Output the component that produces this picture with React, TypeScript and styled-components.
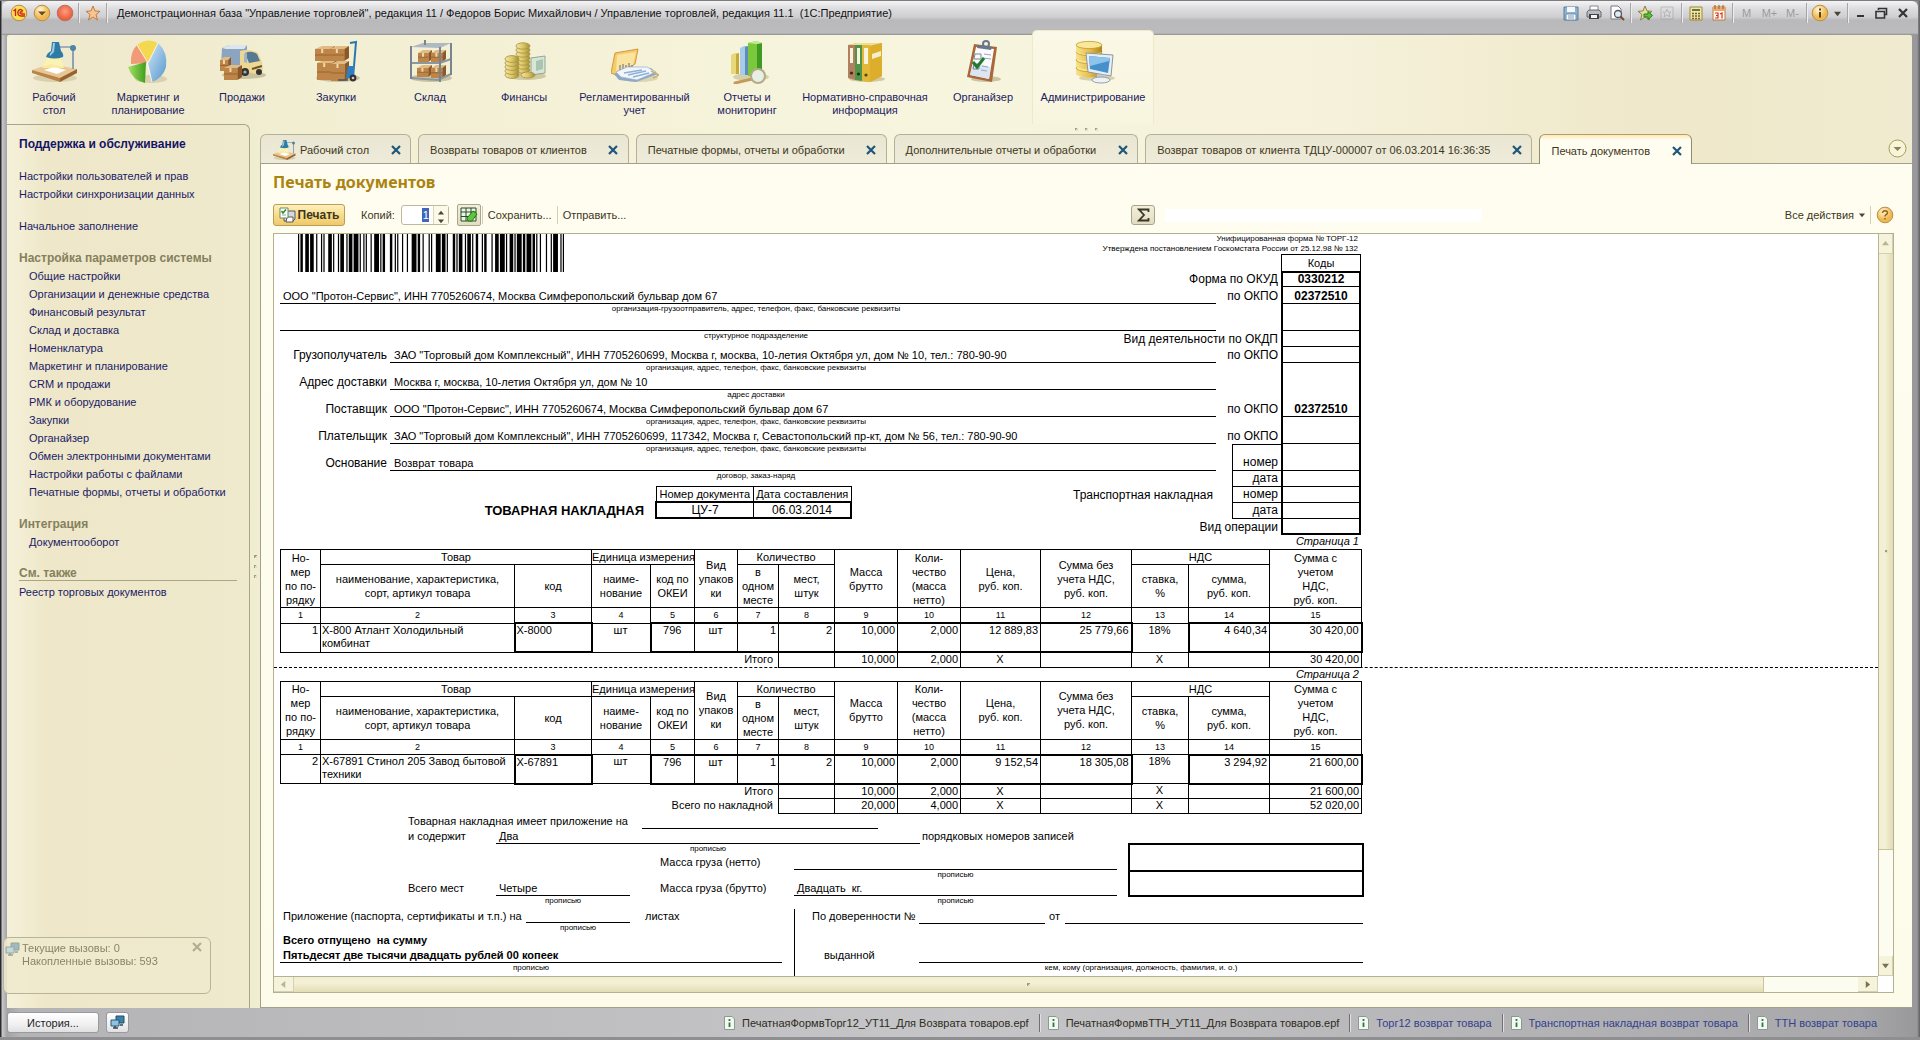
import React from "react";
import styled, { createGlobalStyle, css } from "styled-components";

const Global = createGlobalStyle`
  *, *::before, *::after { box-sizing: border-box; }
  html, body, #root { height: 100%; margin: 0; }
  body { overflow: hidden; font: 11px/14px "Liberation Sans", Arial, sans-serif; color: #3d3620; }
  button, input { font: inherit; color: inherit; margin: 0; padding: 0; border: 0; background: none; border-radius: 0; }
  button { cursor: pointer; }
  a { text-decoration: none; color: inherit; }
  h1, h2, h3, p, ul { margin: 0; padding: 0; font-weight: inherit; font-size: inherit; }
  svg { display: block; flex: none; }
`;

/* ---------- window frame ---------- */

const Window = styled.div`
  height: 100vh;
  display: flex;
  flex-direction: column;
  padding: 0 8px 0 7px;
  border-top: 1px solid #7d7a80;
  border-bottom: 3px solid #8f8f92;
  background: linear-gradient(90deg, #2a2a2c 0 1px, #c9c9cc 2px, #a3a3a6 7px, #b4b4b7 20px, #c6c6c8 50%, #a8a8ab calc(100% - 60px), #98989b calc(100% - 3px), #5e5c62 100%);
`;

const TitleBar = styled.header`
  height: 34px;
  margin: 0 -6px 0 -5px;
  padding: 0 5px 10px 5px;
  display: flex;
  align-items: center;
  background: linear-gradient(#f4f4f5 0, #dcdcde 8px, #cfcfd1 16px, #b9b9bc 19px, #bcbcbf 32px, #8e8e8e 34px);
  border-radius: 6px 6px 0 0;
`;

const TitleText = styled.h1`
  flex: 1;
  padding-left: 8px;
  color: #111;
  white-space: pre;
`;

const TitleButton = styled.button<{ $w?: number; $faint?: boolean }>`
  width: ${(p) => p.$w ?? 23}px;
  height: 22px;
  display: flex;
  align-items: center;
  justify-content: center;
  color: ${(p) => (p.$faint ? "#9a9a9c" : "#333")};
`;

const TitleSep = styled.span`
  width: 1px;
  height: 20px;
  margin: 0 2px;
  background: #a6a6a8;
  box-shadow: 1px 0 #ececee;
`;

const Client = styled.div`
  flex: 1;
  min-height: 0;
  display: flex;
  flex-direction: column;
  border-radius: 2px;
  background: linear-gradient(90deg, #f6f2dc 0, #efe9cd 40px, #f2eed2 15%, #f8f5df 48%, #f5f1da 70%, #efe8ca 86%, #f0ebd0 100%);
`;

/* ---------- sections panel ---------- */

const Sections = styled.nav`
  display: flex;
  height: 89px;
`;

const SectionButton = styled.button<{ $w: number; $active?: boolean }>`
  width: ${(p) => p.$w}px;
  display: flex;
  flex-direction: column;
  align-items: center;
  padding-top: 5px;
  gap: 7px;
  line-height: 13px;
  color: #1b2160;
  white-space: pre-line;
  ${(p) =>
    p.$active &&
    css`
      margin-top: -5px;
      padding-top: 9px;
      border: 1px solid #efe9c9;
      border-bottom: 0;
      border-radius: 5px 5px 0 0;
      background: linear-gradient(#faf8e6, #f8f5df);
    `}
`;

/* ---------- left navigation ---------- */

const Workspace = styled.div`
  flex: 1;
  min-height: 0;
  display: flex;
`;

const Sidebar = styled.nav`
  width: 243px;
  padding: 10px 12px;
  display: flex;
  flex-direction: column;
  gap: 14px;
  line-height: 18px;
  border: 1px solid #a9a58c;
  border-width: 1px 1px 0 0;
  border-radius: 0 6px 0 0;
  background: linear-gradient(90deg, #f5f1da 0, #eee7c9 40px, #efe9cd 100%);
`;

const NavTitle = styled.h2`
  font-size: 12px;
  font-weight: bold;
  color: #141466;
`;

const NavGroup = styled.section`
  display: flex;
  flex-direction: column;
`;

const NavHeading = styled.h3<{ $line?: boolean }>`
  font-size: 12px;
  font-weight: bold;
  color: #85805c;
  ${(p) =>
    p.$line &&
    css`
      line-height: 14px;
      margin-bottom: 2px;
      padding-top: 1px;
      border-bottom: 1px solid #aaa682;
    `}
`;

const NavLink = styled.a<{ $indent?: boolean }>`
  padding-left: ${(p) => (p.$indent ? 10 : 0)}px;
  color: #1b1b66;
  white-space: nowrap;
`;

const Splitter = styled.div<{ $vertical?: boolean }>`
  display: flex;
  align-items: center;
  justify-content: center;
  gap: 7px;
  ${(p) => (p.$vertical ? "width: 10px; flex-direction: column;" : "height: 10px;")}
`;

const GripDot = styled.i`
  width: 3px;
  height: 3px;
  background: linear-gradient(135deg, #a09c80 50%, #e4dfc4 50%);
`;

/* ---------- tabs ---------- */

const Main = styled.main`
  flex: 1;
  min-width: 0;
  display: flex;
  flex-direction: column;
`;

const TabBar = styled.div`
  display: flex;
  align-items: flex-end;
  gap: 7px;
  height: 29px;
`;

const Tab = styled.div<{ $active?: boolean }>`
  height: 29px;
  margin-bottom: ${(p) => (p.$active ? -1 : 0)}px;
  padding: 2px 8px 0 11px;
  display: flex;
  align-items: center;
  border: 1px solid #b3b097;
  border-bottom: 0;
  border-radius: 6px 6px 0 0;
  background: ${(p) => (p.$active ? "linear-gradient(#fbe9b8 0, #fffdf0 5px, #fffdf0)" : "linear-gradient(#e9e6d2, #eeebda)")};
  z-index: ${(p) => (p.$active ? 1 : 0)};
  ${(p) => p.$active && "height: 30px; border-color: #b59f60 #8f8c74 transparent; align-self: flex-start;"}
`;

const TabLabel = styled.button`
  display: flex;
  align-items: center;
  gap: 4px;
  margin-right: 20px;
  color: #40361a;
  white-space: nowrap;
`;

const TabClose = styled.button`
  width: 13px;
  height: 14px;
  display: flex;
  align-items: center;
  justify-content: center;
`;

const TabMenu = styled.button`
  margin: 0 5px 5px auto;
`;

/* ---------- form ---------- */

const Form = styled.section`
  flex: 1;
  min-height: 0;
  display: flex;
  flex-direction: column;
  padding: 6px 18px 14px 12px;
  border: 1px solid #a3a088;
  border-right: 0;
  background: linear-gradient(#fffdf0, #fdfbe9);
`;

const FormTitle = styled.h2`
  font: bold 16px/24px "Noto Sans", "Open Sans", sans-serif;
  color: #ab8410;
`;

const Toolbar = styled.div`
  display: flex;
  align-items: center;
  height: 22px;
  margin: 10px 0 7px;
  white-space: nowrap;
`;

const PrintButton = styled.button`
  height: 22px;
  width: 72px;
  display: flex;
  align-items: center;
  justify-content: center;
  gap: 2px;
  margin-right: 16px;
  font-size: 12px;
  font-weight: bold;
  border: 1px solid #bd9d55;
  border-radius: 3px;
  background: linear-gradient(#fdf0bf, #f7dc8c 50%, #efc96a);
`;

const CopiesBox = styled.span`
  width: 48px;
  height: 20px;
  margin: 0 8px 0 6px;
  display: flex;
  align-items: center;
  border: 1px solid #bdb99c;
  border-radius: 3px;
  background: #fff;
`;

const CopiesInput = styled.input`
  width: 7px;
  height: 14px;
  margin: 0 4px 0 auto;
  text-align: right;
  color: #fff;
  background: #4066b8;
`;

const Spinner = styled.span`
  width: 15px;
  height: 18px;
  display: flex;
  flex-direction: column;
  align-items: center;
  justify-content: center;
  gap: 5px;
  border-left: 1px solid #dcd8c0;
  background: #fbf9e8;
`;

const SpinButton = styled.button`
  height: 3px;
  display: flex;
`;

const IconButton = styled.button`
  width: 24px;
  height: 22px;
  display: flex;
  align-items: center;
  justify-content: center;
  border: 1px solid #a8a58c;
  border-radius: 2px;
  background: linear-gradient(#f3efd9, #e2ddc0);
`;

const ToolSep = styled.span<{ $tight?: boolean }>`
  width: 1px;
  height: 18px;
  margin: 0 5px 0 ${(p) => (p.$tight ? 1 : 5)}px;
  background: #d2ceb4;
`;

const TextButton = styled.button<{ $push?: boolean }>`
  display: flex;
  align-items: center;
  gap: 5px;
  ${(p) => p.$push && "margin-left: auto;"}
`;

const SumGroup = styled.div`
  display: flex;
  align-items: center;
  gap: 10px;
  margin-left: 505px;
`;

const SumButton = styled(IconButton)`
  height: 20px;
  border-radius: 3px;
`;

const SumInput = styled.input`
  width: 317px;
  height: 13px;
  background: #fff;
`;

/* ---------- sheet viewer ---------- */

const Viewer = styled.div`
  flex: 1;
  min-height: 0;
  display: grid;
  grid-template: minmax(0, 1fr) 16px / minmax(0, 1fr) 15px;
  border: 1px solid #b3b192;
  background: #fff;
`;

const Sheet = styled.article`
  overflow: hidden;
  color: #000;
  background: #fff;
`;

const VScroll = styled.div`
  display: flex;
  flex-direction: column;
  border-left: 1px solid #b9b592;
  background: #fdfcf0;
`;

const HScroll = styled.div`
  display: flex;
  border-top: 1px solid #b3b192;
  background: #fdfcf0;
`;

const ScrollArrow = styled.button`
  min-width: 14px;
  min-height: 15px;
  flex: 0 0 20px;
  display: flex;
  align-items: center;
  justify-content: center;
  border: 0 solid #d5d1b0;
  border-width: 0 1px 1px 0;
  background: #f6f3dd;
`;

const ScrollThumb = styled.div<{ $share: number; $vertical?: boolean }>`
  flex: ${(p) => p.$share} 0 0;
  display: flex;
  align-items: center;
  justify-content: center;
  border: 0 solid #c9c49c;
  border-width: ${(p) => (p.$vertical ? "0 0 1px" : "0 1px 0 0")};
  background: ${(p) => `linear-gradient(${p.$vertical ? "90deg, " : ""}#f2eed2, #f4f0d6 40%, #e2ddb4)`};
`;

const ScrollGap = styled.div<{ $share: number }>`
  flex: ${(p) => p.$share} 0 0;
`;

/* ---------- printed form: heading ---------- */

const HeadGrid = styled.div`
  margin-left: 6px;
  display: grid;
  grid-template-columns: 110px 826px 16px 49px 80px;
  grid-template-rows: 20px 17px 16px 17px 27px 16px 16px 27px 27px 27px 27px 16px 16px 16px 16px 14px;
`;

const line = "1px solid #000";
const thick = "2px solid #000";

const Approval = styled.p`
  grid-area: 1 / 2 / 2 / 6;
  padding-right: 3px;
  text-align: right;
  font-size: 8px;
  line-height: 10px;
  white-space: pre-line;
`;

const BarcodeSvg = styled.svg`
  grid-area: 1 / 1 / 4 / 3;
  width: 266px;
  height: 38px;
  margin-left: 18px;
`;

const Field = styled.div<{ $row: number; $wide?: boolean }>`
  grid-row: ${(p) => p.$row};
  grid-column: ${(p) => (p.$wide ? "1 / 3" : "2 / 3")};
  display: flex;
  align-items: flex-end;
  padding-left: ${(p) => (p.$wide ? 3 : 4)}px;
  border-bottom: ${line};
  line-height: 14px;
  white-space: nowrap;
`;

const Note = styled.small<{ $row: number }>`
  grid-row: ${(p) => p.$row};
  grid-column: 1 / 4;
  font-size: 8px;
  line-height: 10px;
  text-align: center;
`;

const Label = styled.div<{ $row: number; $from?: number; $to?: number; $boxed?: boolean; $top?: boolean }>`
  grid-row: ${(p) => p.$row};
  grid-column: ${(p) => p.$from ?? 2} / ${(p) => p.$to ?? 5};
  align-self: stretch;
  display: flex;
  align-items: flex-end;
  justify-content: flex-end;
  padding-right: 3px;
  font-size: 12px;
  line-height: 15px;
  white-space: nowrap;
  border: 0 solid #000;
  ${(p) => p.$boxed && "border-width: 0 0 1px 1px;"}
  ${(p) => p.$top && "border-top-width: 1px;"}
`;

const CodeHead = styled.div`
  grid-area: 2 / 5;
  border: ${line};
  border-bottom: 0;
  line-height: 17px;
  text-align: center;
`;

const Code = styled.div<{ $row: number; $span?: number; $first?: boolean; $last?: boolean }>`
  grid-row: ${(p) => p.$row} / span ${(p) => p.$span ?? 1};
  grid-column: 5;
  display: flex;
  align-items: flex-end;
  justify-content: center;
  font-size: 12px;
  font-weight: bold;
  line-height: 13px;
  border: ${thick};
  border-top: ${(p) => (p.$first ? thick : 0)};
  border-bottom: ${(p) => (p.$last ? thick : line)};
`;

const DocTitle = styled.div`
  grid-area: 13 / 1 / 15 / 3;
  display: flex;
  align-items: flex-end;
`;

const DocName = styled.h2`
  width: 364px;
  margin-right: 11px;
  text-align: right;
  font-size: 13px;
  font-weight: bold;
  line-height: 16px;
`;

const NumberTable = styled.table`
  width: 197px;
  border-collapse: collapse;
  text-align: center;
  th, td { padding: 0; width: 50%; height: 16px; white-space: nowrap; border: ${line}; }
  th { font-weight: normal; line-height: 14px; }
  td { font-size: 12px; line-height: 14px; border-width: 2px 1px 2px 2px; }
  td + td { border-width: 2px 2px 2px 1px; }
`;

const PageNo = styled.p`
  padding-right: 2px;
  width: 1081px;
  margin-left: 6px;
  line-height: 13px;
  text-align: right;
  font-style: italic;
`;

const HeadPageNo = styled(PageNo)`
  grid-area: 16 / 1 / 17 / 6;
  margin-left: 0;
`;

const PageBreak = styled.div`
  border-bottom: 1px dashed #000;
  margin-top: -1px;
`;

/* ---------- printed form: goods table ---------- */

const Goods = styled.table`
  width: 1081px;
  margin-left: 6px;
  table-layout: fixed;
  border-collapse: collapse;
  line-height: 14px;
  text-align: center;
`;

const Tr = styled.tr<{ $h: number }>`
  height: ${(p) => p.$h}px;
`;

const Th = styled.th<{ $small?: boolean }>`
  padding: 0;
  font-weight: normal;
  border: ${line};
  white-space: pre;
  ${(p) => p.$small && "font-size: 9px;"}
`;

const Td = styled.td<{ $align?: string; $thick?: string; $bare?: boolean }>`
  padding: 0 2px 0 1px;
  vertical-align: top;
  line-height: 13px;
  text-align: ${(p) => p.$align ?? "right"};
  border: ${(p) => (p.$bare ? 0 : line)};
  white-space: pre;
  ${(p) => p.$bare && "padding-right: 5px; border-right: 1px solid #000;"}
  ${(p) => p.$thick?.includes("t") && "border-top-width: 2px; border-bottom-width: 2px;"}
  ${(p) => p.$thick?.includes("l") && "border-left-width: 2px;"}
  ${(p) => p.$thick?.includes("r") && "border-right-width: 2px;"}
`;

/* ---------- printed form: closing part ---------- */

const Closing = styled.section`
  display: flex;
  align-items: flex-end;
  margin-left: 6px;
`;

const Consignment = styled(Closing)`
  align-items: stretch;
`;

const Lines = styled.div<{ $w: number; $rule?: boolean }>`
  width: ${(p) => p.$w}px;
  padding-left: ${(p) => (p.$rule ? 17 : 0)}px;
  border-left: ${(p) => (p.$rule ? line : 0)};
`;

const Row = styled.div<{ $h?: number; $pad?: number }>`
  display: flex;
  height: ${(p) => p.$h ?? 26}px;
  padding-left: ${(p) => p.$pad ?? 0}px;
  line-height: 15px;
  white-space: pre;
`;

const Text = styled.span<{ $w?: number; $bold?: boolean; $pad?: number }>`
  width: ${(p) => (p.$w ? `${p.$w}px` : "auto")};
  padding-left: ${(p) => p.$pad ?? 0}px;
  font-weight: ${(p) => (p.$bold ? "bold" : "normal")};
`;

const BlankBox = styled.span<{ $w: number; $bold?: boolean }>`
  width: ${(p) => p.$w}px;
  display: flex;
  flex-direction: column;
  font-weight: ${(p) => (p.$bold ? "bold" : "normal")};
  span { height: 15px; padding-left: 3px; border-bottom: ${line}; }
  small { font-size: 8px; font-weight: normal; line-height: 10px; text-align: center; }
`;

const Stamps = styled.div`
  width: 236px;
  height: 54px;
  margin: 0 0 12px 11px;
  display: grid;
  grid-template-rows: 1fr 1fr;
  border: ${thick};
  div + div { border-top: ${thick}; }
`;

/* ---------- bottom bar ---------- */

const StatusBar = styled.footer`
  height: 29px;
  display: flex;
  align-items: center;
  padding-right: 25px;
  white-space: nowrap;
`;

const StatusButton = styled.button<{ $w: number }>`
  width: ${(p) => p.$w}px;
  height: 21px;
  margin-right: 7px;
  display: flex;
  align-items: center;
  justify-content: center;
  color: #222;
  border: 1px solid #9a9a9c;
  border-radius: 3px;
  background: linear-gradient(#fff, #f0f0f1 60%, #e0e0e2);
`;

const StatusItems = styled.div`
  margin-left: auto;
  display: flex;
`;

const StatusLink = styled.a<{ $visited?: boolean }>`
  display: flex;
  align-items: center;
  gap: 7px;
  height: 18px;
  padding: 0 10px 0 8px;
  color: ${(p) => (p.$visited ? "#2e2b1c" : "#34408c")};
  & + & { border-left: 1px solid #707073; box-shadow: inset 1px 0 #e0e0e2; }
`;

const CallsPopup = styled.aside`
  position: fixed;
  left: 3px;
  bottom: 46px;
  width: 208px;
  height: 57px;
  display: flex;
  align-items: flex-start;
  padding: 4px 8px 0 1px;
  gap: 2px;
  line-height: 13px;
  color: #8a8468;
  border: 1px solid #b9b498;
  border-radius: 6px;
  background: #efe9cddd;
`;

const CallsText = styled.div`
  flex: 1;
  white-space: pre-line;
`;

/* ---------- icons ---------- */

const CloseX = ({ color = "#1d5679", size = 10 }: { color?: string; size?: number }) => (
  <svg width={size} height={size} viewBox="0 0 10 10">
    <path d="M1 1l8 8M9 1l-8 8" stroke={color} strokeWidth="2.2" />
  </svg>
);

const Arrow = ({ dir, color = "#4a4636", size = 7 }: { dir: "up" | "down" | "left" | "right"; color?: string; size?: number }) => {
  const d = { up: "M0 6L4 1L8 6z", down: "M0 2L4 7L8 2z", left: "M6 0L1 4L6 8z", right: "M2 0L7 4L2 8z" }[dir];
  return (
    <svg width={size} height={size} viewBox="0 0 8 8">
      <path d={d} fill={color} />
    </svg>
  );
};

const Defs = styled.svg`
  position: absolute;
  width: 0;
  height: 0;
`;

const Gradients = () => (
  <Defs>
    <defs>
      <linearGradient id="gold"><stop offset="0" stopColor="#f7e48e" /><stop offset=".5" stopColor="#e8c04a" /><stop offset="1" stopColor="#b08420" /></linearGradient>
      <linearGradient id="coin"><stop offset="0" stopColor="#f3e7a4" /><stop offset=".5" stopColor="#dcc768" /><stop offset="1" stopColor="#a48e36" /></linearGradient>
      <linearGradient id="blue" x2="1" y2="1"><stop offset="0" stopColor="#cfe6f8" /><stop offset="1" stopColor="#5596cc" /></linearGradient>
      <linearGradient id="green" x2="1"><stop offset="0" stopColor="#a8e068" /><stop offset="1" stopColor="#3d9e1c" /></linearGradient>
      <radialGradient id="orb" cx=".4" cy=".3"><stop offset="0" stopColor="#fff8d8" /><stop offset="1" stopColor="#f0b850" /></radialGradient>
      <radialGradient id="redorb" cx=".5" cy=".4"><stop offset="0" stopColor="#ff9c80" /><stop offset="1" stopColor="#e8603c" /></radialGradient>
    </defs>
  </Defs>
);

const DeskArt = () => (
  <>
    <ellipse cx="25" cy="38" rx="22" ry="4" fill="#c9bf96" opacity=".6" />
    <path d="M2 30L20 24L47 29L30 38z" fill="#e8c795" />
    <path d="M2 30L30 38V42L2 33z" fill="#b98448" />
    <path d="M30 38L47 29V33L30 42z" fill="#97622e" />
    <path d="M14 30L24 27L36 30L27 34z" fill="#fff" />
    <path d="M18 16L12 28H34L30 16z" fill="#fff6a8" opacity=".75" />
    <path d="M43 8V29" stroke="#8fa2b0" strokeWidth="2" />
    <path d="M28 7H42" stroke="#9fb0bb" strokeWidth="2" />
    <circle cx="43" cy="8" r="3" fill="#4b86a8" />
    <path d="M22 2H29L31 11Q34 14 33 17Q25 20 16 17Q17 13 21 11z" fill="#2f7ba6" />
    <path d="M23 3H25L24 12L20 16Q19 14 22 11z" fill="#9ccde6" />
  </>
);

const boxAt = (x: number, y: number, w: number, h: number) => (
  <g>
    <path d={`M${x} ${y + 3}L${x + w * 0.35} ${y}H${x + w}L${x + w * 0.75} ${y + 3}z`} fill="#e2bb84" />
    <path d={`M${x} ${y + 3}H${x + w * 0.75}V${y + h}H${x}z`} fill="#bd8548" />
    <path d={`M${x + w * 0.75} ${y + 3}L${x + w} ${y}V${y + h - 3}L${x + w * 0.75} ${y + h}z`} fill="#8c5828" />
    <path d={`M${x + w * 0.36} ${y + 3}V${y + 7}`} stroke="#f0d8a8" strokeWidth="2" />
    <path d={`M${x} ${y + h * 0.6}H${x + w * 0.75}`} stroke="#8c5828" strokeWidth=".7" />
  </g>
);

const sectionArt: Record<string, React.ReactNode> = {
  desk: <DeskArt />,
  pie: (
    <>
      <ellipse cx="27" cy="39" rx="16" ry="4" fill="#c9bf96" opacity=".6" />
      <path d="M24 23L34 3Q44 12 42 27Q39 38 28 42z" fill="url(#blue)" />
      <path d="M24 23L13 5Q24 -3 34 3z" fill="#f4d84e" />
      <path d="M24 23L13 5Q6 12 7 24z" fill="#f09a78" />
      <path d="M22 22L4 27Q8 40 21 43z" fill="url(#green)" />
      <path d="M24 23L34 3M24 23L13 5M23 22L28 42" stroke="#fff" strokeWidth="1" fill="none" opacity=".8" />
    </>
  ),
  truck: (
    <>
      <ellipse cx="26" cy="35" rx="22" ry="4" fill="#b9af88" opacity=".7" />
      <path d="M4 8L12 5H29V25L20 29L3 26z" fill="#8ba4c0" />
      <path d="M4 8L12 5H29L26 9H8z" fill="#dbe6f1" />
      <path d="M22 11Q32 8 40 13L44 22L45 31L37 34L22 30z" fill="#ecd795" />
      <path d="M27 13Q34 10 39 14L42 21L31 23z" fill="#587992" />
      <path d="M26 14V22L29 23V13z" fill="#9db7c8" />
      <path d="M34 29L44 26" stroke="#70551e" strokeWidth="2" />
      <circle cx="27" cy="32" r="4" fill="#333" />
      <circle cx="27" cy="32" r="1.6" fill="#aaa" />
      <circle cx="41" cy="32" r="3" fill="#333" />
      {boxAt(2, 17, 11, 14)}
      {boxAt(6, 25, 18, 15)}
    </>
  ),
  boxes: (
    <>
      <ellipse cx="26" cy="38" rx="22" ry="4" fill="#b9af88" opacity=".7" />
      {boxAt(5, 20, 20, 20)}
      {boxAt(19, 21, 18, 20)}
      {boxAt(3, 6, 20, 15)}
      {boxAt(18, 6, 19, 15)}
      <path d="M38 3L44 2L41 38" stroke="#2878b0" strokeWidth="2" fill="none" />
      <path d="M36 26H42V38H34z" fill="#2f7fc0" />
      <circle cx="41" cy="38" r="3.4" fill="#333" />
      <circle cx="41" cy="38" r="1.3" fill="#ccc" />
      <path d="M26 40H36" stroke="#456" strokeWidth="1.5" />
    </>
  ),
  rack: (
    <>
      <ellipse cx="25" cy="38" rx="21" ry="4" fill="#b9af88" opacity=".7" />
      <path d="M5 7L17 3H45L34 8z" fill="#aeb9c2" />
      {boxAt(12, 10, 14, 12)}
      {boxAt(25, 10, 15, 12)}
      {boxAt(11, 25, 15, 12)}
      {boxAt(25, 25, 15, 13)}
      <path d="M5 23H34L45 19M5 38L32 40L45 34" stroke="#8b97a2" strokeWidth="2" fill="none" />
      <path d="M5 6V39M34 7V42M45 3V35M19 0V5" stroke="#78858f" strokeWidth="2" />
    </>
  ),
  coins: (
    <>
      <ellipse cx="26" cy="36" rx="20" ry="4" fill="#c2b88c" opacity=".7" />
      <path d="M31 18L45 16V33L31 35z" fill="#d7e6d6" stroke="#8fa892" />
      <path d="M36 21L43 19V29L36 31z" fill="#a9c4b0" />
      {[30, 26, 22, 18, 14, 10, 6].map((y) => (
        <ellipse key={y} cx="23" cy={y} rx="7" ry="3.2" fill="url(#coin)" stroke="#a8913c" strokeWidth=".8" />
      ))}
      {[35, 31, 27, 23, 19].map((y) => (
        <ellipse key={y} cx="12" cy={y} rx="7" ry="3.4" fill="url(#coin)" stroke="#a8913c" strokeWidth=".8" />
      ))}
      <ellipse cx="28" cy="35" rx="7" ry="3" fill="url(#coin)" stroke="#a8913c" strokeWidth=".8" />
    </>
  ),
  ledger: (
    <>
      <ellipse cx="28" cy="38" rx="19" ry="4" fill="#c2b88c" opacity=".5" />
      <path d="M4 13L27 9L24 24L5 35L0 33z" fill="#f2cd6c" stroke="#d8963a" />
      <path d="M6 15L25 12L22 25L5 31z" fill="#fbe3a0" />
      <path d="M9 30V25M12 29V24M15 29V25M18 28V23M21 28V25" stroke="#5a6b88" />
      <path d="M3 34L14 28L40 28L47 34L25 42L8 40z" fill="#8fa9c4" />
      <path d="M5 32L16 27L36 27L45 32L26 40L10 37z" fill="#f2f6fb" stroke="#9ab0c8" strokeWidth=".7" />
      <path d="M13 33L31 30M17 35L35 31M22 37L38 33" stroke="#8fb0d8" strokeWidth="1.4" />
      <path d="M40 31L48 35L42 38" stroke="#c8b070" strokeWidth="1.500" fill="none" />
    </>
  ),
  bars: (
    <>
      <ellipse cx="28" cy="37" rx="18" ry="4" fill="#c2b88c" opacity=".6" />
      <path d="M8 15L12 13H16V34H8z" fill="#e8d878" />
      <path d="M13 14L16 13V34H13z" fill="#c4aa3c" />
      <path d="M17 8L21 6H25V35H17z" fill="#a8cbe8" />
      <path d="M22 7L25 6V35H22z" fill="#5d8dba" />
      <path d="M25 3L33 1L39 3V36H25z" fill="#7cc83c" />
      <path d="M34 4L39 3V36H34z" fill="#3f9a24" />
      <path d="M25 3L33 1L39 3L34 4z" fill="#bdf090" />
      <path d="M12 43L29 39" stroke="#c49a58" strokeWidth="3" strokeLinecap="round" />
      <circle cx="35" cy="36" r="7" fill="#e6efe4" stroke="#b5aa86" strokeWidth="2" />
    </>
  ),
  binders: (
    <>
      <ellipse cx="26" cy="39" rx="18" ry="3" fill="#c2b88c" opacity=".7" />
      <path d="M7 5L16 3H41V36L29 42L7 38z" fill="#d4ac30" />
      <path d="M7 5L16 3H41L29 6z" fill="#f0dc92" />
      <path d="M7 5H14V40L7 38z" fill="#b08060" />
      <path d="M14 5H21V41L14 40z" fill="#4f9448" />
      <path d="M21 5H29V42L21 41z" fill="#e2b838" />
      <path d="M29 6L41 3V36L29 42z" fill="#dcae2c" />
      <path d="M9 8H12V23H9zM16 8H19V24H16zM23 8H27V24H23z" fill="#f7f3dc" />
      <circle cx="10.500" cy="33" r="1.600" fill="#3b2a10" />
      <circle cx="17.500" cy="34" r="1.600" fill="#12350e" />
      <circle cx="25" cy="35" r="1.600" fill="#5c4408" />
      <path d="M31 14L40 11V16L31 19z" fill="#f5eecb" />
    </>
  ),
  clipboard: (
    <>
      <ellipse cx="27" cy="39" rx="15" ry="3" fill="#b9af88" opacity=".7" />
      <path d="M15 4L38 7L33 42L8 37z" fill="#a8683a" />
      <path d="M17 7L35 9L30 39L11 35z" fill="#fbfbfd" />
      <path d="M11 35L14 23L32 27L30 39z" fill="#cfdcec" opacity=".7" />
      <path d="M16 14H22V19H15zM15 24H20V29H14z" fill="none" stroke="#789" />
      <path d="M25 14L32 15M24 18L32 19M23 26L29 27M22 30L28 31" stroke="#9ab" />
      <path d="M14 22L18 27L25 18" stroke="#1f7c2a" strokeWidth="3" fill="none" />
      <path d="M19 5L33 7L32 10L18 8z" fill="#66788c" />
      <circle cx="27" cy="4" r="3" fill="none" stroke="#66788c" strokeWidth="2" />
    </>
  ),
  admin: (
    <>
      <ellipse cx="28" cy="38" rx="18" ry="3" fill="#c2b88c" opacity=".6" />
      {[28, 20, 12, 5].map((y) => (
        <g key={y}>
          <path d={`M7 ${y}V${y + 7}Q20 ${y + 12} 33 ${y + 7}V${y}z`} fill="url(#gold)" />
          <ellipse cx="20" cy={y} rx="13" ry="3.600" fill="#f9e79a" stroke="#c39a30" strokeWidth=".8" />
        </g>
      ))}
      <path d="M17 13L44 15L42 36L19 32z" fill="#e9eef3" stroke="#8a97a5" />
      <path d="M20 16L41 18L39 33L21 29z" fill="#4690cc" />
      <path d="M20 16L41 18L40 21L21 26z" fill="#8cc4ec" />
      <path d="M28 34L36 35V38H28z" fill="#c2cad2" />
      <ellipse cx="32" cy="40" rx="9" ry="3" fill="#eef2f5" stroke="#95a0aa" />
    </>
  ),
};

const PrinterIcon = () => (
  <svg width="16" height="16" viewBox="0 0 16 16">
    <path d="M4 1h8v6H4z" fill="#fff" stroke="#889" />
    <path d="M1 7L3 5H13L15 7V12H1z" fill="#b7bcc3" stroke="#666b73" />
    <path d="M3 9H13V14H3z" fill="#40444a" />
    <path d="M5 10H11V13H5z" fill="#f5f5f5" />
  </svg>
);

const PrintFormIcon = () => (
  <svg width="17" height="16" viewBox="0 0 17 16">
    <path d="M5 6L7 4H16V12L14 14H5z" fill="#d5d9de" stroke="#55595f" />
    <path d="M8 10H14V15H7z" fill="#fff" stroke="#55595f" />
    <path d="M1 1H9V11H1z" fill="#fff" stroke="#6d8c5a" />
    <path d="M2.500 4L4 6L7 2.500" stroke="#2c8c2c" strokeWidth="1.600" fill="none" />
    <path d="M3 8H7" stroke="#8aa" />
  </svg>
);

const TableEditIcon = () => (
  <svg width="18" height="16" viewBox="0 0 18 16">
    <path d="M1 1H16V14H1z" fill="#eaf5e6" stroke="#284b28" />
    <path d="M1 5H16M1 9.500H16M6 1V14M11 1V14" stroke="#284b28" />
    <path d="M7 11L13 4L17 7L12 14L8 14z" fill="#62c43c" stroke="#1f7d1a" />
  </svg>
);

const StarIcon = ({ add }: { add?: boolean }) => (
  <svg width="16" height="16" viewBox="0 0 16 16">
    <path d="M8 1L10 6L15 6.300L11 9.600L12.500 15L8 12L3.500 15L5 9.600L1 6.300L6 6z" fill={add ? "#e4e09a" : "#f7c690"} stroke={add ? "#8a8440" : "#c47a40"} />
    {add && <path d="M7 9H11V6.500L15.500 10.500L11 14.500V12H7z" fill="#5cc13a" stroke="#2c7d1c" />}
  </svg>
);

const OrbIcon = ({ kind }: { kind: "1c" | "down" | "red" | "info" | "help" }) => (
  <svg width="18" height="18" viewBox="0 0 18 18">
    <circle cx="9" cy="9" r="7.800" fill={kind === "red" ? "url(#redorb)" : "url(#orb)"} stroke={kind === "red" ? "#b97060" : "#b98d48"} />
    {kind === "1c" && (
      <>
        <circle cx="9" cy="9" r="7" fill="#fbe14e" />
        <path d="M3.500 7L5.500 5.500V12M13 7Q9.500 3.800 8 7.500Q7 11.500 11 12H15M12.500 8.500Q10.500 6.500 10 9Q10 10 12 10H15" stroke="#cc2418" strokeWidth="1.400" fill="none" />
      </>
    )}
    {kind === "down" && <path d="M5 7.500H13L9 11.500z" fill="#6a4c1c" />}
    {kind === "info" && <path d="M9 4.500V6.500M9 8V13.500" stroke="#5a4410" strokeWidth="2" />}
    {kind === "help" && <path d="M6.500 7Q6.700 4.700 9 4.700Q11.500 4.800 11.500 6.800Q11.400 8.200 9.600 9Q9 9.400 9 10.600M9 12V13.600" stroke="#9a6418" strokeWidth="1.500" fill="none" />}
  </svg>
);

const ServerCallsIcon = ({ faded }: { faded?: boolean }) => (
  <svg width="15" height="15" viewBox="0 0 15 15" opacity={faded ? 0.45 : 1}>
    <path d="M6 1H14V8H6z" fill="#3d7fae" stroke="#255" />
    <path d="M1 5H9V11H1z" fill="#8ec3e2" stroke="#2a5873" />
    <path d="M3 13H8M5 11V13M10 10H13" stroke="#345" strokeWidth="1.500" />
  </svg>
);

const InfoPageIcon = () => (
  <svg width="11" height="14" viewBox="0 0 11 14">
    <path d="M.5.5H8L10.500 3V13.500H.5z" fill="#f4f8f4" stroke="#8a9a8c" />
    <path d="M5.500 3V5M5.500 6.500V11" stroke="#2c7a3a" strokeWidth="1.800" />
  </svg>
);

const TitleGlyph: Record<string, React.ReactNode> = {
  save: (
    <svg width="16" height="15" viewBox="0 0 16 15">
      <path d="M1 1H15V14H1z" fill="#8fb4d2" stroke="#5b7e9c" />
      <path d="M4 1H12V6H4z" fill="#f4f8fb" />
      <path d="M3 8H13V14H3z" fill="#fff" stroke="#6b8ca8" />
      <path d="M5 10H11M5 12H11" stroke="#7b98b0" />
    </svg>
  ),
  preview: (
    <svg width="16" height="16" viewBox="0 0 16 16">
      <path d="M2 1H9L12 4V14H2z" fill="#fff" stroke="#778" />
      <circle cx="9" cy="9" r="3.500" fill="#dcecf5" stroke="#556" strokeWidth="1.300" />
      <path d="M11.500 11.500L15 15" stroke="#7a4a2a" strokeWidth="2" />
    </svg>
  ),
  ghost: (
    <svg width="15" height="14" viewBox="0 0 15 14" opacity=".4">
      <path d="M1 1H13V13H1z" fill="#ddd" stroke="#888" />
      <path d="M7 3L8 6H11L9 8L10 11L7 9L4 11L5 8L3 6H6z" fill="none" stroke="#888" />
    </svg>
  ),
  calc: (
    <svg width="14" height="15" viewBox="0 0 14 15">
      <path d="M1 1H13V14H1z" fill="#f2e5a8" stroke="#a08838" />
      <path d="M3 3H11V5H3z" fill="#5f7a4a" />
      <path d="M3 7.500H11M3 10H11M3 12.500H11" stroke="#7a6420" strokeWidth="1.500" strokeDasharray="2 1" />
    </svg>
  ),
  calendar: (
    <svg width="14" height="16" viewBox="0 0 14 16">
      <path d="M1 2H13V15H1z" fill="#fff6e8" stroke="#c07a40" />
      <path d="M1 2H13V6H1z" fill="#f0a868" />
      <path d="M3 0V4M7 0V4M11 0V4" stroke="#8a5a30" />
      <path d="M3 8H6V13H3M4 10.500H6M8 9L10 8V13.500" stroke="#d0342c" fill="none" strokeWidth="1.200" />
    </svg>
  ),
  minimize: (
    <svg width="10" height="10" viewBox="0 0 10 10"><path d="M1 8H8" stroke="#333" strokeWidth="2" /></svg>
  ),
  restore: (
    <svg width="13" height="12" viewBox="0 0 13 12">
      <path d="M3.500 3V1.500H11.500V7.500H10" stroke="#333" strokeWidth="1.600" fill="none" />
      <path d="M1 4.500H9.500V11H1z" stroke="#333" strokeWidth="1.600" fill="none" />
    </svg>
  ),
};

/* run lengths: bar, gap, bar, gap … */
const barRuns =
  "1 1 2 2 3 1 3 2 1 3 1 1 1 3 3 1 1 3 1 1 3 2 1 1 3 1 4 1 1 2 1 1 1 3 1 2 4 1 1 1 2 4 2 2 1 1 1 3 1 3 1 3 4 1 2 2 1 4 1 1 1 3 4 1 3 1 1 4 2 1 1 1 3 2 1 1 3 1 1 2 2 3 1 1 2 4 1 2 3 1 4 1 1 2 3 1 1 1 4 1 2 1 4 1 2 1 1 2 1 4 1 3 1 1 4 2 1 1 1"
    .split(" ")
    .map(Number);

const Barcode = () => {
  let x = 0;
  const bars: React.ReactNode[] = [];
  barRuns.forEach((w, i) => {
    if (i % 2 === 0) bars.push(<rect key={i} x={x} y="0" width={w} height="38" />);
    x += w;
  });
  return (
    <BarcodeSvg viewBox={`0 0 ${x} 38`} preserveAspectRatio="none">
      {bars}
    </BarcodeSvg>
  );
};

/* ---------- data ---------- */

const sections = [
  { art: "desk", text: "Рабочий\nстол", w: 94 },
  { art: "pie", text: "Маркетинг и\nпланирование", w: 94 },
  { art: "truck", text: "Продажи", w: 94 },
  { art: "boxes", text: "Закупки", w: 94 },
  { art: "rack", text: "Склад", w: 94 },
  { art: "coins", text: "Финансы", w: 94 },
  { art: "ledger", text: "Регламентированный\nучет", w: 127 },
  { art: "bars", text: "Отчеты и\nмониторинг", w: 98 },
  { art: "binders", text: "Нормативно-справочная\nинформация", w: 138 },
  { art: "clipboard", text: "Органайзер", w: 98 },
  { art: "admin", text: "Администрирование", w: 122, active: true },
];

const settings = [
  "Общие настройки",
  "Организации и денежные средства",
  "Финансовый результат",
  "Склад и доставка",
  "Номенклатура",
  "Маркетинг и планирование",
  "CRM и продажи",
  "РМК и оборудование",
  "Закупки",
  "Органайзер",
  "Обмен электронными документами",
  "Настройки работы с файлами",
  "Печатные формы, отчеты и обработки",
];

const tabs = [
  "Рабочий стол",
  "Возвраты товаров от клиентов",
  "Печатные формы, отчеты и обработки",
  "Дополнительные отчеты и обработки",
  "Возврат товаров от клиента ТДЦУ-000007 от 06.03.2014 16:36:35",
  "Печать документов",
];

const statusLinks = [
  { text: "ПечатнаяФормвТорг12_УТ11_Для Возврата товаров.epf", visited: true },
  { text: "ПечатнаяФормвТТН_УТ11_Для Возврата товаров.epf", visited: true },
  { text: "Торг12 возврат товара" },
  { text: "Транспортная накладная возврат товара" },
  { text: "ТТН возврат товара" },
];

const colWidths = [40, 194, 77, 59, 44, 43, 41, 56, 63, 63, 80, 91, 57, 81, 92];

/* align and thick-frame sides of the 15 goods columns */
const cellStyle: [string, string][] = [
  ["right", ""], ["left", ""], ["left", "tlr"], ["center", ""], ["center", "tl"],
  ["center", "t"], ["right", "t"], ["right", "t"], ["right", "t"], ["right", "t"],
  ["right", "t"], ["right", "tr"], ["center", ""], ["right", "tl"], ["right", "tr"],
];

type Total = { label: string; cells: string[] };

const GoodsTable = ({ cells, totals }: { cells: string[]; totals: Total[] }) => (
  <Goods>
    <colgroup>
      {colWidths.map((w, i) => (
        <col key={i} style={{ width: w }} />
      ))}
    </colgroup>
    <thead>
      <Tr $h={15}>
        <Th rowSpan={2}>{"Но-\nмер\nпо по-\nрядку"}</Th>
        <Th colSpan={2}>Товар</Th>
        <Th colSpan={2}>Единица измерения</Th>
        <Th rowSpan={2}>{"Вид\nупаков\nки"}</Th>
        <Th colSpan={2}>Количество</Th>
        <Th rowSpan={2}>{"Масса\nбрутто"}</Th>
        <Th rowSpan={2}>{"Коли-\nчество\n(масса\nнетто)"}</Th>
        <Th rowSpan={2}>{"Цена,\nруб. коп."}</Th>
        <Th rowSpan={2}>{"Сумма без\nучета НДС,\nруб. коп."}</Th>
        <Th colSpan={2}>НДС</Th>
        <Th rowSpan={2}>{"Сумма с\nучетом\nНДС,\nруб. коп."}</Th>
      </Tr>
      <Tr $h={43}>
        <Th>{"наименование, характеристика,\nсорт, артикул товара"}</Th>
        <Th>код</Th>
        <Th>{"наиме-\nнование"}</Th>
        <Th>{"код по\nОКЕИ"}</Th>
        <Th>{"в\nодном\nместе"}</Th>
        <Th>{"мест,\nштук"}</Th>
        <Th>{"ставка,\n%"}</Th>
        <Th>{"сумма,\nруб. коп."}</Th>
      </Tr>
      <Tr $h={15}>
        {colWidths.map((_, i) => (
          <Th key={i} $small>{i + 1}</Th>
        ))}
      </Tr>
    </thead>
    <tbody>
      <Tr $h={29}>
        {cells.map((c, i) => (
          <Td key={i} $align={cellStyle[i][0]} $thick={cellStyle[i][1]}>{c}</Td>
        ))}
      </Tr>
      {totals.map((t) => (
        <Tr $h={15} key={t.label}>
          <Td colSpan={7} $bare>{t.label}</Td>
          {t.cells.map((c, i) => (
            <Td key={i} $align={c === "X" ? "center" : "right"}>{c}</Td>
          ))}
        </Tr>
      ))}
    </tbody>
  </Goods>
);

const Blank = ({ w, value, note, bold }: { w: number; value?: string; note?: string; bold?: boolean }) => (
  <BlankBox $w={w} $bold={bold}>
    <span>{value}</span>
    {note && <small>{note}</small>}
  </BlankBox>
);

const bankNote = "организация, адрес, телефон, факс, банковские реквизиты";

const Torg12 = () => (
  <Sheet>
    <HeadGrid>
      <Barcode />
      <Approval>{"Унифицированная форма № ТОРГ-12\nУтверждена постановлением Госкомстата России от 25.12.98 № 132"}</Approval>
      <CodeHead>Коды</CodeHead>
      <Label $row={3}>Форма по ОКУД</Label>
      <Code $row={3} $first>0330212</Code>
      <Field $row={4} $wide>ООО "Протон-Сервис", ИНН 7705260674, Москва Симферопольский бульвар дом 67</Field>
      <Label $row={4}>по ОКПО</Label>
      <Code $row={4}>02372510</Code>
      <Field $row={5} $wide />
      <Note $row={5}>организация-грузоотправитель, адрес, телефон, факс, банковские реквизиты</Note>
      <Code $row={5} />
      <Note $row={6}>структурное подразделение</Note>
      <Label $row={6}>Вид деятельности по ОКДП</Label>
      <Code $row={6} />
      <Label $row={7} $from={1} $to={2}>Грузополучатель</Label>
      <Field $row={7}>ЗАО "Торговый дом Комплексный", ИНН 7705260699, Москва г, москва, 10-летия Октября ул, дом № 10, тел.: 780-90-90</Field>
      <Label $row={7}>по ОКПО</Label>
      <Code $row={7} />
      <Note $row={8}>{bankNote}</Note>
      <Label $row={8} $from={1} $to={2}>Адрес доставки</Label>
      <Field $row={8}>Москва г, москва, 10-летия Октября ул, дом № 10</Field>
      <Note $row={9}>адрес доставки</Note>
      <Label $row={9} $from={1} $to={2}>Поставщик</Label>
      <Field $row={9}>ООО "Протон-Сервис", ИНН 7705260674, Москва Симферопольский бульвар дом 67</Field>
      <Label $row={9}>по ОКПО</Label>
      <Code $row={8} $span={2}>02372510</Code>
      <Note $row={10}>{bankNote}</Note>
      <Label $row={10} $from={1} $to={2}>Плательщик</Label>
      <Field $row={10}>ЗАО "Торговый дом Комплексный", ИНН 7705260699, 117342, Москва г, Севастопольский пр-кт, дом № 56, тел.: 780-90-90</Field>
      <Label $row={10}>по ОКПО</Label>
      <Code $row={10} />
      <Note $row={11}>{bankNote}</Note>
      <Label $row={11} $from={1} $to={2}>Основание</Label>
      <Field $row={11}>Возврат товара</Field>
      <Label $row={11} $from={4} $boxed $top>номер</Label>
      <Code $row={11} />
      <Note $row={12}>договор, заказ-наряд</Note>
      <Label $row={12} $from={4} $boxed>дата</Label>
      <Code $row={12} />
      <DocTitle>
        <DocName>ТОВАРНАЯ НАКЛАДНАЯ</DocName>
        <NumberTable>
          <thead>
            <tr><th>Номер документа</th><th>Дата составления</th></tr>
          </thead>
          <tbody>
            <tr><td>ЦУ-7</td><td>06.03.2014</td></tr>
          </tbody>
        </NumberTable>
      </DocTitle>
      <Label $row={13} $to={3}>Транспортная накладная</Label>
      <Label $row={13} $from={4} $boxed>номер</Label>
      <Code $row={13} />
      <Label $row={14} $from={4} $boxed>дата</Label>
      <Code $row={14} />
      <Label $row={15}>Вид операции</Label>
      <Code $row={15} $last />
      <HeadPageNo>Страница 1</HeadPageNo>
    </HeadGrid>

    <GoodsTable
      cells={["1", "Х-800 Атлант Холодильный\nкомбинат", "Х-8000", "шт", "796", "шт", "1", "2", "10,000", "2,000", "12 889,83", "25 779,66", "18%", "4 640,34", "30 420,00"]}
      totals={[{ label: "Итого", cells: ["", "10,000", "2,000", "X", "", "X", "", "30 420,00"] }]}
    />
    <PageBreak />
    <PageNo>Страница 2</PageNo>
    <GoodsTable
      cells={["2", "Х-67891 Стинол 205 Завод бытовой\nтехники", "Х-67891", "шт", "796", "шт", "1", "2", "10,000", "2,000", "9 152,54", "18 305,08", "18%", "3 294,92", "21 600,00"]}
      totals={[
        { label: "Итого", cells: ["", "10,000", "2,000", "X", "", "X", "", "21 600,00"] },
        { label: "Всего по накладной", cells: ["", "20,000", "4,000", "X", "", "X", "", "52 020,00"] },
      ]}
    />

    <Closing>
      <Lines $w={837}>
        <Row $h={15} $pad={128}>
          <Text $w={234}>Товарная накладная имеет приложение на</Text>
          <Blank w={236} />
        </Row>
        <Row $pad={128}>
          <Text $w={88}>и содержит</Text>
          <Blank w={424} value="Два" note="прописью" />
          <Text $pad={2}>порядковых номеров записей</Text>
        </Row>
        <Row $pad={380}>
          <Text $w={134}>Масса груза (нетто)</Text>
          <Blank w={323} note="прописью" />
        </Row>
        <Row $h={28} $pad={128}>
          <Text $w={88}>Всего мест</Text>
          <Blank w={134} value="Четыре" note="прописью" />
          <Text $w={164} $pad={30}>Масса груза (брутто)</Text>
          <Blank w={323} value="Двадцать  кг." note="прописью" />
        </Row>
      </Lines>
      <Stamps><div /><div /></Stamps>
    </Closing>
    <Consignment>
      <Lines $w={514}>
        <Row $h={24} $pad={3}>
          <Text $w={243}>Приложение (паспорта, сертификаты и т.п.) на</Text>
          <Blank w={104} note="прописью" />
          <Text $pad={15}>листах</Text>
        </Row>
        <Row $h={15} $pad={3}>
          <Text $bold>Всего отпущено  на сумму</Text>
        </Row>
        <Row $h={28}>
          <Blank w={502} bold value="Пятьдесят две тысячи двадцать рублей 00 копеек" note="прописью" />
        </Row>
      </Lines>
      <Lines $w={570} $rule>
        <Row $h={39}>
          <Text $w={107}>По доверенности №</Text>
          <Blank w={126} />
          <Text $w={20} $pad={4}>от</Text>
          <Blank w={298} />
        </Row>
        <Row $h={28}>
          <Text $w={107} $pad={12}>выданной</Text>
          <Blank w={444} note="кем, кому (организация, должность, фамилия, и. о.)" />
        </Row>
      </Lines>
    </Consignment>
  </Sheet>
);

export default function App() {
  return (
    <Window>
      <Global />
      <Gradients />
      <TitleBar>
        <TitleButton aria-label="Главное меню"><OrbIcon kind="1c" /></TitleButton>
        <TitleButton aria-label="Меню"><OrbIcon kind="down" /></TitleButton>
        <TitleButton aria-label="Стоп"><OrbIcon kind="red" /></TitleButton>
        <TitleSep />
        <TitleButton aria-label="Избранное"><StarIcon /></TitleButton>
        <TitleSep />
        <TitleText>{'Демонстрационная база "Управление торговлей", редакция 11 / Федоров Борис Михайлович / Управление торговлей, редакция 11.1  (1С:Предприятие)'}</TitleText>
        <TitleButton aria-label="Сохранить">{TitleGlyph.save}</TitleButton>
        <TitleButton aria-label="Печать"><PrinterIcon /></TitleButton>
        <TitleButton aria-label="Просмотр">{TitleGlyph.preview}</TitleButton>
        <TitleSep />
        <TitleButton aria-label="Добавить в избранное"><StarIcon add /></TitleButton>
        <TitleButton aria-label="Ссылка">{TitleGlyph.ghost}</TitleButton>
        <TitleSep />
        <TitleButton aria-label="Калькулятор">{TitleGlyph.calc}</TitleButton>
        <TitleButton aria-label="Календарь">{TitleGlyph.calendar}</TitleButton>
        <TitleSep />
        <TitleButton $faint>M</TitleButton>
        <TitleButton $faint>M+</TitleButton>
        <TitleButton $faint>M-</TitleButton>
        <TitleSep />
        <TitleButton $w={21} aria-label="Справка"><OrbIcon kind="info" /></TitleButton>
        <TitleButton $w={15} aria-label="Ещё"><Arrow dir="down" /></TitleButton>
        <TitleSep />
        <TitleButton $w={21} aria-label="Свернуть">{TitleGlyph.minimize}</TitleButton>
        <TitleButton $w={21} aria-label="Развернуть">{TitleGlyph.restore}</TitleButton>
        <TitleButton $w={21} aria-label="Закрыть"><CloseX color="#333" /></TitleButton>
      </TitleBar>

      <Client>
        <Sections>
          {sections.map((s) => (
            <SectionButton key={s.text} $w={s.w} $active={s.active}>
              <svg width="48" height="44" viewBox="0 0 48 44">{sectionArt[s.art]}</svg>
              <span>{s.text}</span>
            </SectionButton>
          ))}
        </Sections>

        <Workspace>
          <Sidebar>
            <NavTitle>Поддержка и обслуживание</NavTitle>
            <NavGroup>
              <NavLink href="#">Настройки пользователей и прав</NavLink>
              <NavLink href="#">Настройки синхронизации данных</NavLink>
            </NavGroup>
            <NavGroup>
              <NavLink href="#">Начальное заполнение</NavLink>
            </NavGroup>
            <NavGroup>
              <NavHeading>Настройка параметров системы</NavHeading>
              {settings.map((s) => (
                <NavLink key={s} href="#" $indent>{s}</NavLink>
              ))}
            </NavGroup>
            <NavGroup>
              <NavHeading>Интеграция</NavHeading>
              <NavLink href="#" $indent>Документооборот</NavLink>
            </NavGroup>
            <NavGroup>
              <NavHeading $line>См. также</NavHeading>
              <NavLink href="#">Реестр торговых документов</NavLink>
            </NavGroup>
          </Sidebar>
          <Splitter $vertical><GripDot /><GripDot /><GripDot /></Splitter>

          <Main>
            <Splitter><GripDot /><GripDot /><GripDot /></Splitter>
            <TabBar>
              {tabs.map((t, i) => (
                <Tab key={t} $active={i === tabs.length - 1}>
                  <TabLabel>
                    {i === 0 && <svg width="24" height="22" viewBox="0 0 48 44"><DeskArt /></svg>}
                    {t}
                  </TabLabel>
                  <TabClose aria-label="Закрыть вкладку"><CloseX /></TabClose>
                </Tab>
              ))}
              <TabMenu aria-label="Список вкладок">
                <svg width="19" height="19" viewBox="0 0 19 19">
                  <circle cx="9.500" cy="9.500" r="8.500" fill="#f8f4da" stroke="#a89c58" />
                  <path d="M5.500 8H13.500L9.500 12z" fill="#8a8450" />
                </svg>
              </TabMenu>
            </TabBar>

            <Form>
              <FormTitle>Печать документов</FormTitle>
              <Toolbar>
                <PrintButton><PrintFormIcon />Печать</PrintButton>
                <label htmlFor="copies">Копий:</label>
                <CopiesBox>
                  <CopiesInput id="copies" defaultValue="1" />
                  <Spinner>
                    <SpinButton aria-label="Больше"><Arrow dir="up" size={6} /></SpinButton>
                    <SpinButton aria-label="Меньше"><Arrow dir="down" size={6} /></SpinButton>
                  </Spinner>
                </CopiesBox>
                <IconButton aria-label="Редактирование"><TableEditIcon /></IconButton>
                <ToolSep $tight />
                <TextButton>Сохранить...</TextButton>
                <ToolSep />
                <TextButton>Отправить...</TextButton>
                <SumGroup>
                  <SumButton aria-label="Сумма">
                    <svg width="13" height="14" viewBox="0 0 13 14">
                      <path d="M11.500 4V1.500H2L7 7L2 12.500H11.500V10" stroke="#3a362a" strokeWidth="1.800" fill="none" />
                    </svg>
                  </SumButton>
                  <SumInput aria-label="Значение суммы" />
                </SumGroup>
                <TextButton $push>Все действия <Arrow dir="down" size={6} /></TextButton>
                <ToolSep />
                <TextButton aria-label="Справка"><OrbIcon kind="help" /></TextButton>
              </Toolbar>

              <Viewer>
                <Torg12 />
                <VScroll>
                  <ScrollArrow aria-label="Вверх"><Arrow dir="up" color="#b9b590" /></ScrollArrow>
                  <ScrollThumb $share={598} $vertical><GripDot /></ScrollThumb>
                  <ScrollGap $share={106} />
                  <ScrollArrow aria-label="Вниз"><Arrow dir="down" color="#77734c" /></ScrollArrow>
                </VScroll>
                <HScroll>
                  <ScrollArrow aria-label="Влево"><Arrow dir="left" color="#b9b590" /></ScrollArrow>
                  <ScrollThumb $share={1470}><GripDot /></ScrollThumb>
                  <ScrollGap $share={94} />
                  <ScrollArrow aria-label="Вправо"><Arrow dir="right" color="#77734c" /></ScrollArrow>
                </HScroll>
              </Viewer>
            </Form>
          </Main>
        </Workspace>
      </Client>

      <StatusBar>
        <StatusButton $w={92}>История...</StatusButton>
        <StatusButton $w={23} aria-label="Вызовы сервера"><ServerCallsIcon /></StatusButton>
        <StatusItems>
          {statusLinks.map((l) => (
            <StatusLink key={l.text} href="#" $visited={l.visited}>
              <InfoPageIcon />
              {l.text}
            </StatusLink>
          ))}
        </StatusItems>
      </StatusBar>

      <CallsPopup>
        <ServerCallsIcon faded />
        <CallsText>{"Текущие вызовы: 0\nНакопленные вызовы: 593"}</CallsText>
        <CloseX color="#b3ad90" />
      </CallsPopup>
    </Window>
  );
}
